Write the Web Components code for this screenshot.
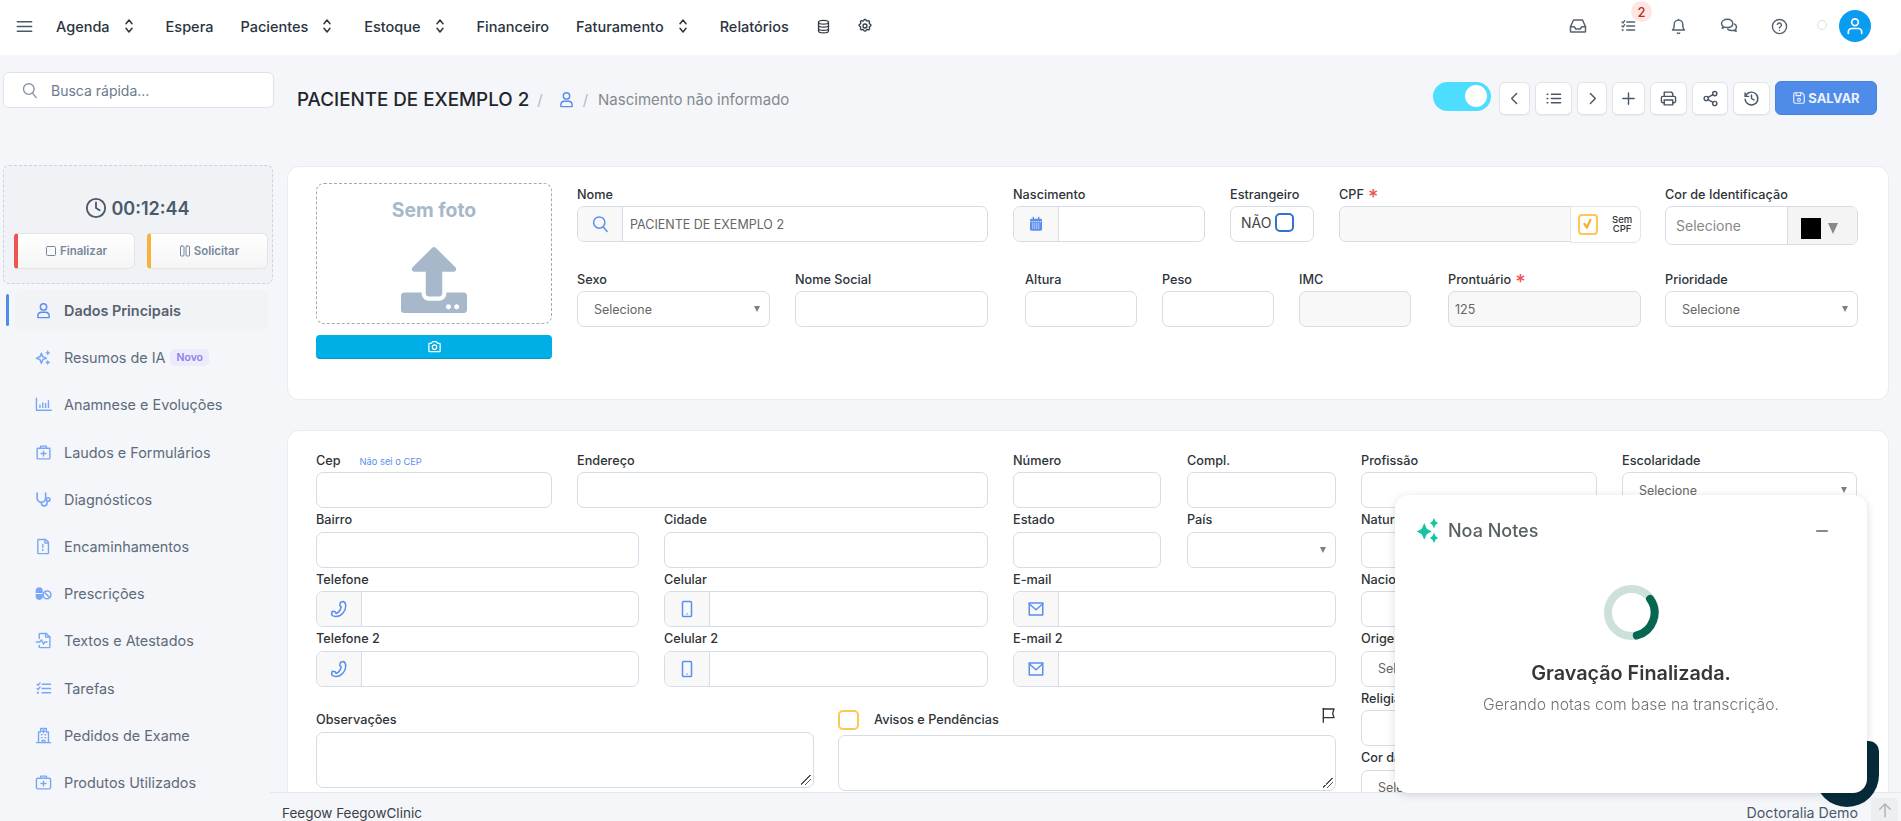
<!DOCTYPE html>
<html lang="pt-BR">
<head>
<meta charset="utf-8">
<title>Paciente</title>
<style>
  html, body { margin: 0; height: 100%; overflow: hidden; }
  body { background: #f4f6f9; font-family: Inter, "Liberation Sans", sans-serif; color: #333; }
  #app { display: grid; grid-template-rows: 55px 1fr; height: 821px; }
  #body { display: flex; min-height: 0; }
  #main { flex: 1; min-width: 0; display: flex; flex-direction: column; }
  #scroll { flex: 1; min-height: 0; overflow: hidden; padding: 0 12px 0 17px; }
</style>
</head>
<body>
<div id="app">
  <app-topbar></app-topbar>
  <div id="body">
    <app-sidebar></app-sidebar>
    <div id="main">
      <div id="scroll">
        <page-head></page-head>
        <form-card style="height:234px;padding-top:16px">
          <div style="display:flex;gap:25px">
            <photo-box></photo-box>
            <div style="flex:1;padding-top:3px">
              <form-row cols="411px 192px 84px 302px 193px" gap="25px 25px 25px 24px" style="margin-bottom:29px">
                <form-field label="Nome" addon="search" value="PACIENTE DE EXEMPLO 2"></form-field>
                <form-field label="Nascimento" addon="calendar"></form-field>
                <form-field label="Estrangeiro" kind="foreign"></form-field>
                <form-field label="CPF" req kind="cpf"></form-field>
                <form-field label="Cor de Identificação" kind="color"></form-field>
              </form-row>
              <form-row cols="193px 193px 112px 112px 112px 193px 193px" gap="25px 37px 25px 25px 37px 24px">
                <form-field label="Sexo" kind="select" value="Selecione"></form-field>
                <form-field label="Nome Social"></form-field>
                <form-field label="Altura"></form-field>
                <form-field label="Peso"></form-field>
                <form-field label="IMC" kind="disabled"></form-field>
                <form-field label="Prontuário" req kind="disabled" value="125"></form-field>
                <form-field label="Prioridade" kind="select" value="Selecione"></form-field>
              </form-row>
            </div>
          </div>
        </form-card>
        <form-card style="margin-top:30px;padding-top:21px;height:600px">
          <div style="display:flex;gap:25px">
            <div style="width:1020px;flex:none;display:flex;flex-direction:column;gap:3.5px">
              <form-row cols="236px 411px 148px 149px" gap="25px 25px 26px">
                <form-field label="Cep" hint="Não sei o CEP"></form-field>
                <form-field label="Endereço"></form-field>
                <form-field label="Número"></form-field>
                <form-field label="Compl."></form-field>
              </form-row>
              <form-row cols="323px 324px 148px 149px" gap="25px 25px 26px">
                <form-field label="Bairro"></form-field>
                <form-field label="Cidade"></form-field>
                <form-field label="Estado"></form-field>
                <form-field label="País" kind="select"></form-field>
              </form-row>
              <form-row cols="323px 324px 323px" gap="25px 25px">
                <form-field label="Telefone" addon="phone"></form-field>
                <form-field label="Celular" addon="mobile"></form-field>
                <form-field label="E-mail" addon="mail"></form-field>
              </form-row>
              <form-row cols="323px 324px 323px" gap="25px 25px">
                <form-field label="Telefone 2" addon="phone"></form-field>
                <form-field label="Celular 2" addon="mobile"></form-field>
                <form-field label="E-mail 2" addon="mail"></form-field>
              </form-row>
              <form-row cols="498px 498px" gap="24px" style="margin-top:21.500px">
                <form-field label="Observações" kind="area"></form-field>
                <form-field label="Avisos e Pendências" kind="notice"></form-field>
              </form-row>
            </div>
            <div style="flex:1;display:flex;flex-direction:column;gap:3.5px">
              <form-row cols="236px 235px" gap="25px">
                <form-field label="Profissão"></form-field>
                <form-field label="Escolaridade" kind="select" value="Selecione"></form-field>
              </form-row>
              <form-row cols="236px"><form-field label="Naturalidade"></form-field></form-row>
              <form-row cols="236px"><form-field label="Nacionalidade"></form-field></form-row>
              <form-row cols="236px"><form-field label="Origem" kind="select" value="Selecione"></form-field></form-row>
              <form-row cols="236px"><form-field label="Religião"></form-field></form-row>
              <form-row cols="236px"><form-field label="Cor da pele" kind="select" value="Selecione"></form-field></form-row>
            </div>
          </div>
        </form-card>
      </div>
      <app-footer></app-footer>
    </div>
  </div>
</div>
<chat-launcher></chat-launcher>
<noa-notes></noa-notes>

<script>
const line = 'fill="none" stroke="currentColor" stroke-width="2" stroke-linecap="round" stroke-linejoin="round"'
const ICONS = {
  menu: `<path ${line} d="M3 6h18M3 12h18M3 18h18"/>`,
  updown: `<path ${line} d="M8 9l4-5 4 5M8 15l4 5 4-5"/>`,
  db: `<g ${line}><ellipse cx="12" cy="5" rx="8" ry="3"/><path d="M4 5v14c0 1.7 3.6 3 8 3s8-1.300 8-3V5M4 10c0 1.700 3.600 3 8 3s8-1.300 8-3M4 15c0 1.700 3.600 3 8 3s8-1.300 8-3"/></g>`,
  gear: `<g ${line}><circle cx="12" cy="12" r="3"/><path d="M10.300 3.300c.4-1.700 3-1.700 3.400 0 .3 1.100 1.500 1.600 2.500 1 1.500-.9 3.300.9 2.400 2.400-.6 1-.1 2.200 1 2.500 1.700.4 1.700 3 0 3.400-1.100.3-1.600 1.500-1 2.500.9 1.500-.9 3.300-2.400 2.400-1-.6-2.200-.1-2.500 1-.4 1.700-3 1.700-3.400 0-.3-1.100-1.500-1.600-2.500-1-1.500.9-3.300-.9-2.400-2.400.6-1 .1-2.200-1-2.500-1.700-.4-1.700-3 0-3.400 1.100-.3 1.600-1.500 1-2.500-.9-1.500.9-3.300 2.400-2.400 1 .6 2.200.1 2.500-1z"/></g>`,
  inbox: `<g ${line}><path d="M2 13h5l2 3h6l2-3h5"/><path d="M6 4h12l4 9v6a1 1 0 0 1-1 1H3a1 1 0 0 1-1-1v-6z"/></g>`,
  tasks: `<g ${line}><path d="M10 6h12M10 12h12M10 18h12M3 6l1.500 1.500L7 4M3 12l1.500 1.500L7 10"/><circle cx="4" cy="18" r=".6"/></g>`,
  bell: `<g ${line}><path d="M6 9a6 6 0 0 1 12 0c0 6 2.500 8 2.500 8h-17S6 15 6 9z"/><path d="M10.300 21a2 2 0 0 0 3.400 0M12 2v1"/></g>`,
  chat: `<g ${line}><path d="M10 3c-4.400 0-8 2.500-8 5.700 0 1.500.8 2.800 2 3.800L3 15l3.500-1.500c1 .3 2.200.5 3.500.5 4.400 0 7-2.300 7-5.300S14.400 3 10 3z"/><path d="M19.500 9.500c1.500.9 2.500 2.200 2.500 3.800 0 1.100-.5 2.200-1.400 3l1 2.700-3.200-1.300c-.9.300-1.900.4-2.900.4-2.200 0-4-.7-5.200-1.900"/></g>`,
  help: `<g ${line}><circle cx="12" cy="12" r="10"/><path d="M9 9a3 3 0 0 1 5.800 1c0 2-3 2.500-3 4M12 17.500v.01"/></g>`,
  user: `<g ${line}><circle cx="12" cy="7" r="4.500"/><path d="M4 22v-3a5 5 0 0 1 5-4.500h6a5 5 0 0 1 5 4.500v3z"/></g>`,
  userline: `<g ${line}><circle cx="12" cy="7.500" r="4"/><path d="M4 21v-2a4 4 0 0 1 4-4h8a4 4 0 0 1 4 4v2"/></g>`,
  left: `<path ${line} d="M15 5l-7 7 7 7"/>`,
  right: `<path ${line} d="M9 5l7 7-7 7"/>`,
  plus: `<path ${line} d="M12 4v16M4 12h16"/>`,
  list: `<path ${line} d="M9 6h13M9 12h13M9 18h13M3 6h1M3 12h1M3 18h1"/>`,
  print: `<g ${line}><path d="M6 9V3h10l2 2v4M6 18H4a2 2 0 0 1-2-2v-5a2 2 0 0 1 2-2h16a2 2 0 0 1 2 2v5a2 2 0 0 1-2 2h-2"/><path d="M6 14h12v7H6z"/></g>`,
  share: `<g ${line}><circle cx="18" cy="5" r="3"/><circle cx="6" cy="12" r="3"/><circle cx="18" cy="19" r="3"/><path d="M8.600 10.500l6.800-4M8.600 13.500l6.800 4"/></g>`,
  history: `<g ${line}><path d="M3 4v5h5"/><path d="M3.500 9A9 9 0 1 1 3 13"/><path d="M12 7v5l3.500 2"/></g>`,
  save: `<g ${line}><path d="M3 5a2 2 0 0 1 2-2h12l4 4v12a2 2 0 0 1-2 2H5a2 2 0 0 1-2-2z"/><path d="M7 3v5h8V3"/><circle cx="12" cy="15" r="2.500"/></g>`,
  search: `<g ${line}><circle cx="11" cy="10" r="7.500"/><path d="M16.500 16l5 6"/></g>`,
  clock: `<g ${line}><circle cx="12" cy="12" r="10"/><path d="M12 6v6l4 2.500"/></g>`,
  square: `<rect ${line} x="3" y="3" width="18" height="18" rx="2"/>`,
  pause: `<g ${line}><rect x="3" y="2" width="7" height="20" rx="2"/><rect x="14" y="2" width="7" height="20" rx="2"/></g>`,
  spark: `<g fill="currentColor"><path d="M9 6l2 5 5 2-5 2-2 5-2-5-5-2 5-2z" fill="none" stroke="currentColor" stroke-width="2.200" stroke-linejoin="round"/><path d="M18 1.500l1.200 2.800 2.800 1.200-2.800 1.200L18 9.500l-1.200-2.800L14 5.500l2.800-1.200zM18 15l1.200 2.800 2.800 1.200-2.800 1.200L18 23l-1.200-2.800L14 19l2.800-1.200z"/></g>`,
  chart: `<g ${line}><path d="M2 3v17h21"/><path d="M7 17v-5M11 17V9M15 17v-7M19 17V6" stroke-linecap="butt"/></g>`,
  clip: `<g ${line}><path d="M4 6h16a1 1 0 0 1 1 1v13a1 1 0 0 1-1 1H4a1 1 0 0 1-1-1V7a1 1 0 0 1 1-1z"/><path d="M8 6V3h8v3M12 10v7M8.500 13.500h7"/></g>`,
  stetho: `<g ${line} style="stroke-width:2.400"><path d="M3 3v7a6 6 0 0 0 12 0V3"/><path d="M9 16v1a4 4 0 0 0 8 0v-1"/><circle cx="18.500" cy="12" r="2.500"/></g>`,
  note: `<g ${line}><path d="M5 2h10l4 4v15a1 1 0 0 1-1 1H5a1 1 0 0 1-1-1V3a1 1 0 0 1 1-1z"/><path d="M14 2v5h5M11 9v4M11 16v1.500"/></g>`,
  pills: `<g><rect x="1" y="3" width="10" height="18" rx="5" fill="currentColor"/><path d="M1 12h10" stroke="#f4f6f9" stroke-width="1.500"/><circle cx="17" cy="14" r="5.500" fill="none" stroke="currentColor" stroke-width="2.200"/><path d="M13.500 10.500l7 7" stroke="currentColor" stroke-width="2.200"/></g>`,
  filemed: `<g ${line}><path d="M6 9V3a1 1 0 0 1 1-1h9l5 5v14a1 1 0 0 1-1 1H7a1 1 0 0 1-1-1v-2"/><path d="M15 2v5h6M2 14h5l2-3 3 6 2-3h3"/></g>`,
  hospital: `<g ${line}><path d="M2 22h20M5 22V7h3V2h8v5h3v15"/><path d="M12 4v4M10 6h4M9 11h1M14 11h1M9 15h1M14 15h1M10 22v-3h4v3"/></g>`,
  medkit: `<g ${line}><rect x="2" y="6" width="20" height="15" rx="2"/><path d="M8 6V3h8v3M12 10v7M8.500 13.500h7"/></g>`,
  calendar: `<g><path fill="currentColor" d="M5 4h14a2 2 0 0 1 2 2v14a2 2 0 0 1-2 2H5a2 2 0 0 1-2-2V6a2 2 0 0 1 2-2z"/><path stroke="currentColor" stroke-width="2" d="M8 1v4M16 1v4"/><path stroke="#fff" stroke-width="1.200" d="M3 8.500h18M6 12h12M6 15h12M6 18h12" stroke-dasharray="2 1"/></g>`,
  phone: `<path ${line} d="M14 3l4-1c2 1 3 3 3 6 0 7-6 14-13 14-3 0-5-1-6-3l1-4 4 .5 1 2.500c3-1 6-5 7-9l-2-1.500z"/>`,
  mobile: `<g ${line}><rect x="6" y="2" width="12" height="20" rx="1.500"/><path d="M12 18.500v.01"/></g>`,
  mail: `<g ${line}><rect x="3" y="4" width="18" height="16" rx="0"/><path d="M3 5l9 8 9-8"/></g>`,
  camera: `<g ${line}><path d="M4 7h3l2-3h6l2 3h3a1 1 0 0 1 1 1v11a1 1 0 0 1-1 1H4a1 1 0 0 1-1-1V8a1 1 0 0 1 1-1z"/><circle cx="12" cy="13" r="3.500"/></g>`,
  flag: `<g ${line}><path d="M5 23V2"/><path d="M5 3h16l-2 6.500 2 6.500H5"/></g>`,
  check: `<path ${line} style="stroke-width:4" d="M6 12l4 6 6-13"/>`,
  arrowup: `<path ${line} d="M12 21V4M5 11l7-7 7 7"/>`,
  minus: `<path ${line} d="M4 12h16"/>`,
  upload: `<path fill="currentColor" d="M296 384h-80c-13.300 0-24-10.700-24-24V192h-87.700c-17.800 0-26.700-21.500-14.100-34.100L242.300 5.700c7.500-7.500 19.800-7.500 27.300 0l152.200 152.200c12.600 12.600 3.700 34.100-14.100 34.100H320v168c0 13.300-10.700 24-24 24zm216-8v112c0 13.300-10.700 24-24 24H24c-13.300 0-24-10.700-24-24V376c0-13.300 10.700-24 24-24h136v8c0 30.900 25.100 56 56 56h80c30.900 0 56-25.100 56-56v-8h136c13.300 0 24 10.700 24 24zm-124 88c0-11-9-20-20-20s-20 9-20 20 9 20 20 20 20-9 20-20zm64 0c0-11-9-20-20-20s-20 9-20 20 9 20 20 20 20-9 20-20z"/>`,
  noa: `<path fill="currentColor" d="M9 5.500l2.700 6 5.300 3-5.300 3L9 23.500l-2.700-6-5.300-3 5.300-3zM19.500 0l1.800 3.700 2.700 1.800-2.700 1.800-1.800 3.700-1.800-3.700L15 5.500l2.700-1.800zM19.500 16l1.800 3.700 2.700 1.800-2.700 1.800-1.800 3.700-1.800-3.700-2.700-1.800 2.700-1.800z"/>`
}
const icon = (name, size) => {
  const box = name == 'upload' ? '0 0 512 512' : name == 'noa' ? '0 0 25 27' : '0 0 24 24'
  return `<svg width="${size}" height="${size}" viewBox="${box}" style="display:block;flex:none" aria-hidden="true">${ICONS[name]}</svg>`
}

class AppTopbar extends HTMLElement {
  connectedCallback() {
    this.attachShadow({ mode: 'open' })
    const nav = [['Agenda', 1], ['Espera'], ['Pacientes', 1], ['Estoque', 1], ['Financeiro'], ['Faturamento', 1], ['Relatórios']]
    this.shadowRoot.innerHTML = `
      <style>
        :host { display: flex; align-items: center; background: #fff; height: 55px; box-sizing: border-box; padding: 0 30px 3px 15px; border-radius: 0 0 8px 0; }
        .burger { color: #4a5a6b; margin-right: 22px; }
        nav { display: flex; align-items: center; color: #2b3440; font: 500 14.5px Inter, sans-serif; }
        .item { display: flex; align-items: center; margin-right: 27px; white-space: nowrap; }
        .item.sub { margin-right: 28px; }
        .item svg { margin-left: 10px; color: #333; }
        .tool { color: #333d47; margin-right: 26px; }
        .right { margin-left: auto; display: flex; align-items: center; color: #56636f; }
        .right > * { flex: none; }
        .slot { width: 50.500px; display: flex; justify-content: center; position: relative; }
        .badge { position: absolute; left: 28px; top: -17px; width: 21px; height: 21px; border-radius: 50%; background: #fde7e4; color: #c62828; font: 500 13px Inter, sans-serif; display: flex; align-items: center; justify-content: center; }
        .dot { width: 8px; height: 8px; border-radius: 50%; border: 1px solid #dcdfe3; margin: -3px 12px 0 12px; }
        .avatar { width: 32px; height: 32px; border-radius: 50%; background: #0a9cf0; color: #fff; display: flex; align-items: center; justify-content: center; }
      </style>
      <div class="burger">${icon('menu', 19)}</div>
      <nav>
        ${nav.map(n => `<div class="item ${n[1] ? 'sub' : ''}">${n[0]}${n[1] ? icon('updown', 18) : ''}</div>`).join('')}
        <div class="tool">${icon('db', 15)}</div>
        <div class="tool">${icon('gear', 16)}</div>
      </nav>
      <div class="right">
        <div class="slot">${icon('inbox', 18)}</div>
        <div class="slot">${icon('tasks', 16)}<span class="badge">2</span></div>
        <div class="slot">${icon('bell', 17)}</div>
        <div class="slot">${icon('chat', 18)}</div>
        <div class="slot">${icon('help', 17)}</div>
        <span class="dot"></span>
        <div class="avatar">${icon('userline', 20)}</div>
      </div>`
  }
}
customElements.define('app-topbar', AppTopbar)

class AppSidebar extends HTMLElement {
  connectedCallback() {
    this.attachShadow({ mode: 'open' })
    const menu = [
      ['user', 'Dados Principais'], ['spark', 'Resumos de IA', 'Novo'], ['chart', 'Anamnese e Evoluções'],
      ['clip', 'Laudos e Formulários'], ['stetho', 'Diagnósticos'], ['note', 'Encaminhamentos'], ['pills', 'Prescrições'],
      ['filemed', 'Textos e Atestados'], ['tasks', 'Tarefas'], ['hospital', 'Pedidos de Exame'], ['medkit', 'Produtos Utilizados']
    ]
    this.shadowRoot.innerHTML = `
      <style>
        :host { display: block; width: 270px; flex: none; padding-top: 17px; box-sizing: border-box; }
        .search { margin-left: 3px; width: 271px; height: 36px; box-sizing: border-box; background: #fff; border: 1px solid #dfe2e7; border-radius: 6px; display: flex; align-items: center; padding-left: 17px; gap: 13px; color: #6c7a8e; font: 400 14px Inter, sans-serif; }
        .search svg { color: #8a95a3; }
        .timer { margin: 57px 0 6px 3px; width: 270px; height: 119px; box-sizing: border-box; border: 1px dashed #cfd2d8; border-radius: 6px; background: #f0f2f6; padding: 27px 4px 0 10px; }
        .time { display: flex; align-items: center; justify-content: center; gap: 4px; color: #4b5a6b; font: 600 18px Inter, sans-serif; height: 30px; padding-right: 7px; }
        .btns { display: flex; gap: 12px; margin-top: 10px; }
        .btn { flex: 1; height: 36px; box-sizing: border-box; border: 1px solid #e3e4e8; border-left: 4px solid; border-radius: 4px 6px 6px 4px; background: linear-gradient(#fff, #f5f5f6); display: flex; align-items: center; justify-content: center; gap: 3px; color: #78889c; font: 600 11.5px Inter, sans-serif; }
        .menu { display: flex; flex-direction: column; gap: 6.200px; }
        .it { position: relative; margin-left: 15px; width: 253px; height: 41px; box-sizing: border-box; display: flex; align-items: center; padding-left: 20px; border-radius: 6px; color: #5e6b7b; font: 400 14.4px Inter, sans-serif; white-space: nowrap; }
        .it .ic { width: 17px; display: flex; justify-content: center; color: #7aa7f5; margin-right: 12px; }
        .it.on { background: #f2f3f6; font-weight: 600; color: #56626f; }
        .it.on .ic { color: #5b8fec; }
        .it.on::before { content: ""; position: absolute; left: -9px; top: 4px; bottom: 5px; width: 3px; border-radius: 2px; background: #4f8be8; }
        .new { margin-left: 5px; padding: 2px 6px; border-radius: 5px; background: #ebebfb; color: #8f7fe8; font: 600 10.5px Inter, sans-serif; }
      </style>
      <div class="search">${icon('search', 17)}<span>Busca rápida...</span></div>
      <div class="timer">
        <div class="time">${icon('clock', 22)}<span>00:12:44</span></div>
        <div class="btns">
          <div class="btn" style="border-left-color:#ef5350">${icon('square', 12)}Finalizar</div>
          <div class="btn" style="border-left-color:#f6b23c">${icon('pause', 12)}Solicitar</div>
        </div>
      </div>
      <div class="menu">
        ${menu.map((m, i) => `<div class="it ${i == 0 ? 'on' : ''}"><span class="ic">${icon(m[0], 17)}</span><span>${m[1]}</span>${m[2] ? `<span class="new">${m[2]}</span>` : ''}</div>`).join('')}
      </div>`
  }
}
customElements.define('app-sidebar', AppSidebar)

class PageHead extends HTMLElement {
  connectedCallback() {
    this.attachShadow({ mode: 'open' })
    const tool = (n, w) => `<div class="tb" style="width:${w}px">${icon(n, 17)}</div>`
    this.shadowRoot.innerHTML = `
      <style>
        :host { display: flex; align-items: center; height: 34px; padding: 26px 12px 51px 10px; }
        .crumbs { display: flex; align-items: center; margin-top: 2px; }
        h1 { margin: 0; font: 500 18.8px Inter, sans-serif; color: #22262c; white-space: nowrap; }
        .sep { color: #b5b9c0; font: 400 15px Inter, sans-serif; }
        .u { color: #5b8fec; }
        .birth { color: #85898f; font: 400 15px Inter, sans-serif; }
        .tools { margin-left: auto; display: flex; align-items: center; gap: 5px; }
        .toggle { width: 58px; height: 29px; border-radius: 15px; background: #4dddff; margin: -4px 3px 0 0; position: relative; }
        .toggle::after { content: ""; position: absolute; right: 4px; top: 3.500px; width: 22px; height: 22px; border-radius: 50%; background: #fff; }
        .tb { height: 33px; box-sizing: border-box; background: #fff; border: 1px solid #e1e3e7; border-radius: 6px; display: flex; align-items: center; justify-content: center; color: #4a5664; box-shadow: 0 1px 1px rgba(0,0,0,.05); }
        .save { width: 102px; height: 34px; box-sizing: border-box; background: #4f8be8; border: 1px solid #4a82d8; border-radius: 6px; color: #e9f1fd; display: flex; align-items: center; justify-content: center; gap: 2px; font: 700 13px Inter, sans-serif; }
      </style>
      <div class="crumbs">
        <h1>PACIENTE DE EXEMPLO 2</h1>
        <span class="sep" style="margin:0 15px 0 8px">/</span><span class="u">${icon('user', 17)}</span><span class="sep" style="margin:0 10px 0 8px">/</span>
        <span class="birth">Nascimento não informado</span>
      </div>
      <div class="tools">
        <div class="toggle"></div>
        ${tool('left', 31)}${tool('list', 37)}${tool('right', 30)}${tool('plus', 33)}${tool('print', 37)}${tool('share', 36)}${tool('history', 37)}
        <div class="save">${icon('save', 14)}SALVAR</div>
      </div>`
  }
}
customElements.define('page-head', PageHead)

class FormCard extends HTMLElement {
  connectedCallback() {
    this.attachShadow({ mode: 'open' })
    this.shadowRoot.innerHTML = `
      <style>
        :host { display: block; box-sizing: border-box; background: #fff; border: 1px solid #e9ecf0; border-radius: 12px; padding: 0 30px 0 28px; }
      </style>
      <slot></slot>`
  }
}
customElements.define('form-card', FormCard)

class FormRow extends HTMLElement {
  connectedCallback() {
    this.attachShadow({ mode: 'open' })
    const cols = this.getAttribute('cols').split(' ')
    const gaps = (this.getAttribute('gap') || '').split(' ')
    // gaps differ between columns, so they go into the template as empty tracks
    const tpl = cols.map((c, i) => i < cols.length - 1 ? c + ' ' + gaps[i] : c).join(' ')
    this.shadowRoot.innerHTML = `
      <style>
        :host { display: grid; grid-template-columns: ${tpl}; }
      </style>
      <slot></slot>`
    ;[...this.children].forEach((c, i) => c.style.gridColumn = String(i * 2 + 1))
  }
}
customElements.define('form-row', FormRow)

class FormField extends HTMLElement {
  connectedCallback() {
    this.attachShadow({ mode: 'open' })
    const label = this.getAttribute('label')
    const kind = this.getAttribute('kind') || 'input'
    const value = this.getAttribute('value') || ''
    const addon = this.getAttribute('addon')
    const hint = this.getAttribute('hint')
    const pad = kind == 'disabled' ? 6 : kind == 'select' ? 16 : 13
    const caret = '<i class="caret"></i>'
    let control = `<div class="box"><span class="v">${value}</span></div>`
    if (addon) control = `<div class="box has"><span class="add">${icon(addon, addon == 'calendar' ? 16 : 18)}</span><span class="v">${value}</span></div>`
    if (kind == 'disabled') control = `<div class="box off"><span class="v">${value}</span></div>`
    if (kind == 'select') control = `<div class="box"><span class="v">${value}</span>${caret}</div>`
    if (kind == 'foreign') control = `<div class="box" style="padding:0 0 3px 10px;gap:4px"><span class="no">NÃO</span><span class="chk"></span></div>`
    if (kind == 'cpf') control = `<div class="box off" style="padding:0;justify-content:flex-end;overflow:visible"><span class="nocpf"><span class="yes">${icon('check', 14)}</span><b>Sem<br>CPF</b></span></div>`
    if (kind == 'color') control = `<div class="box" style="height:39px;margin-bottom:-3px;padding:0 0 0 10px"><span class="ph">Selecione</span><span class="swatch"><i></i><u></u></span></div>`
    if (kind == 'area') control = `<div class="box area"><i class="grip"></i></div>`
    if (kind == 'notice') control = `<div class="box area" style="margin-top:3px"><i class="grip"></i></div>`
    this.shadowRoot.innerHTML = `
      <style>
        :host { display: block; min-width: 0; }
        .lab { height: 20px; box-sizing: border-box; padding-bottom: 4px; display: flex; align-items: center; color: #2e3338; font: 500 12.7px Inter, sans-serif; white-space: nowrap; }
        .lab .req { color: #f05252; margin-left: 4px; font-size: 20px; line-height: 1; height: 14px; }
        .hint { margin-left: 19px; color: #5b8fec; font: 400 9.3px Inter, sans-serif; padding-top: 2px; }
        .box { height: 36px; box-sizing: border-box; background: #fff; border: 1px solid #d6dbe8; border-radius: 7px; display: flex; align-items: center; padding-left: ${pad}px; color: #666; font: 400 12.5px Inter, sans-serif; position: relative; overflow: hidden; }
        .box.has { padding-left: 0; }
        .add { flex: none; width: 44px; height: 100%; background: #f8f8f9; border-right: 1px solid #d6dbe8; display: flex; align-items: center; justify-content: center; color: #5b8fec; margin-right: 7px; }
        .off { background: #f8f8f8; }
        .caret { position: absolute; right: 9px; top: 14px; border: 3.500px solid transparent; border-top: 6px solid #808080; border-bottom: 0; }
        .no { color: #444; font-size: 14px; }
        .chk { width: 19px; height: 19px; box-sizing: border-box; border: 2px solid #2d73cf; border-radius: 5px; }
        .nocpf { width: 71px; height: 37px; margin-right: -1px; box-sizing: border-box; display: flex; align-items: center; background: #fff; border: 1px solid #e3e5ea; border-radius: 0 7px 7px 0; padding-left: 7px; gap: 14px; }
        .yes { width: 20px; height: 21px; box-sizing: border-box; border: 2px solid #ffc655; border-radius: 4px; color: #f4b02f; display: flex; align-items: center; justify-content: center; }
        .nocpf b { font: 500 9.5px/9.500px Inter, sans-serif; color: #333; text-align: center; }
        .ph { color: #888; font-size: 14px; flex: 1; }
        .swatch { width: 70px; height: 100%; background: #f4f4f4; border-left: 1px solid #d6dbe8; display: flex; align-items: center; padding-left: 13px; gap: 7px; box-sizing: border-box; }
        .swatch i { width: 20px; height: 21px; background: #000; margin-top: 5px; }
        .swatch u { border: 5.500px solid transparent; border-top: 11px solid #888; border-bottom: 0; margin-top: 6px; }
        .area { height: 56px; }
        .grip { position: absolute; right: 2px; bottom: 2px; width: 10px; height: 10px; background: linear-gradient(135deg, transparent 45%, #555 45%, #555 52%, transparent 52%, transparent 68%, #555 68%, #555 75%, transparent 75%); }
        .flag { margin-left: auto; margin-top: -9px; color: #333; }
        .nchk { width: 21px; height: 20px; box-sizing: border-box; border: 2px solid #ffc655; border-radius: 5px; margin-right: 15px; }
      </style>
      <div class="lab">
        ${kind == 'notice' ? '<span class="nchk"></span>' : ''}${label}
        ${this.hasAttribute('req') ? '<span class="req">*</span>' : ''}
        ${hint ? `<span class="hint">${hint}</span>` : ''}
        ${kind == 'notice' ? `<span class="flag">${icon('flag', 16)}</span>` : ''}
      </div>
      ${control}`
  }
}
customElements.define('form-field', FormField)

class PhotoBox extends HTMLElement {
  connectedCallback() {
    this.attachShadow({ mode: 'open' })
    this.shadowRoot.innerHTML = `
      <style>
        :host { display: block; width: 236px; flex: none; }
        .drop { height: 141px; box-sizing: border-box; border: 1px dashed #a9a9a9; border-radius: 8px; display: flex; flex-direction: column; align-items: center; color: #a8b8cb; padding-top: 14px; }
        .t { font: 700 19.4px/24px Inter, sans-serif; margin-bottom: 25px; }
        .cam { margin-top: 11px; height: 24px; box-sizing: border-box; background: #00afe5; border-bottom: 1px solid #0596c4; border-radius: 4px; display: flex; align-items: center; justify-content: center; color: #fff; }
      </style>
      <div class="drop"><div class="t">Sem foto</div>${icon('upload', 66)}</div>
      <div class="cam">${icon('camera', 15)}</div>`
  }
}
customElements.define('photo-box', PhotoBox)

class AppFooter extends HTMLElement {
  connectedCallback() {
    this.attachShadow({ mode: 'open' })
    this.shadowRoot.innerHTML = `
      <style>
        :host { display: flex; height: 29px; box-sizing: border-box; border-top: 1px solid #e5e7eb; background: #f5f6f9; padding: 0 3px 0 12px; align-items: flex-end; font: 400 13.500px/16px Inter, sans-serif; color: #3a4048; }
        .r { margin-left: auto; color: #4a5a6b; margin-right: 13px; font-size: 14.2px; }
        .up { width: 27px; height: 23px; background: #eceef0; border-radius: 3px 3px 0 0; display: flex; align-items: center; justify-content: center; color: #b0b4ba; }
      </style>
      <span>Feegow FeegowClinic</span>
      <span class="r">Doctoralia Demo</span>
      <span class="up">${icon('arrowup', 18)}</span>`
  }
}
customElements.define('app-footer', AppFooter)

class ChatLauncher extends HTMLElement {
  connectedCallback() {
    this.attachShadow({ mode: 'open' })
    this.shadowRoot.innerHTML = `
      <style>
        :host { position: fixed; left: 1815px; top: 741px; width: 64px; height: 66px; background: #062c3b; border-radius: 10px 10px 32px 32px; }
      </style>`
  }
}
customElements.define('chat-launcher', ChatLauncher)

class NoaNotes extends HTMLElement {
  connectedCallback() {
    this.attachShadow({ mode: 'open' })
    this.shadowRoot.innerHTML = `
      <style>
        :host { position: fixed; left: 1395px; top: 495px; width: 472px; height: 298px; box-sizing: border-box; background: #fff; border-radius: 14px; box-shadow: 0 2px 10px rgba(0,0,0,.14); padding: 22px 37px 0 20px; display: flex; flex-direction: column; align-items: center; }
        header { align-self: stretch; display: flex; align-items: center; height: 27px; color: #596063; font: 500 18px Inter, sans-serif; gap: 8px; }
        header .noa { color: #14c4a2; }
        header .min { margin-left: auto; color: #5f6368; }
        .ring { margin-top: 41px; display: block; }
        h2 { margin: 20px 0 0; font: 600 19.800px/26px Inter, sans-serif; color: #34383b; white-space: nowrap; }
        p { margin: 9px 0 0; font: 300 15.700px/20px Inter, sans-serif; color: #6f7477; white-space: nowrap; }
        .body { display: flex; flex-direction: column; align-items: center; padding-left: 17px; }
      </style>
      <header><span class="noa">${icon('noa', 25)}</span><span>Noa Notes</span><span class="min">${icon('minus', 16)}</span></header>
      <div class="body">
        <svg class="ring" width="55" height="55" viewBox="0 0 55 55" aria-hidden="true">
          <circle cx="27.500" cy="27.500" r="23.500" fill="none" stroke="#cde0dc" stroke-width="8"/>
          <path d="M44 11.500 A23.500 23.500 0 0 1 36 49.500" transform="rotate(8 27.500 27.500)" fill="none" stroke="#07664f" stroke-width="8" stroke-linecap="round"/>
        </svg>
        <h2>Gravação Finalizada.</h2>
        <p>Gerando notas com base na transcrição.</p>
      </div>`
  }
}
customElements.define('noa-notes', NoaNotes)
</script>
</body>
</html>
